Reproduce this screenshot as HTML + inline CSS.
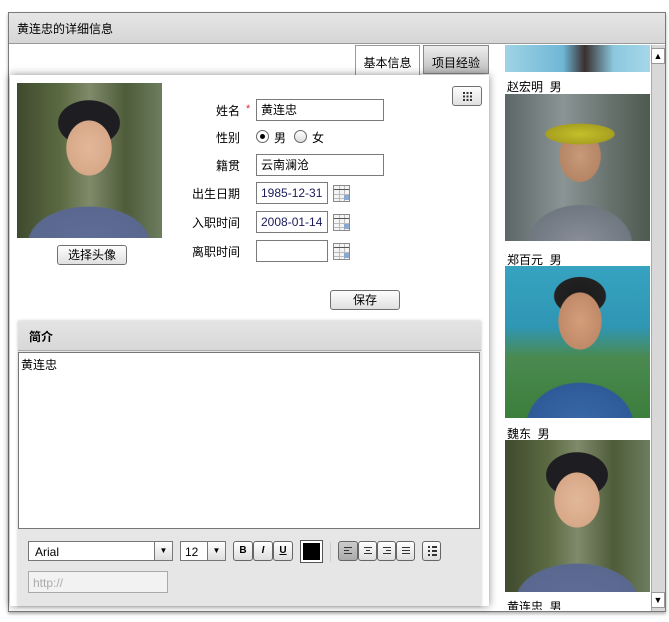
<!DOCTYPE html>
<html><head><meta charset="utf-8"><style>
*{box-sizing:border-box;margin:0;padding:0}
body{width:669px;height:622px;background:#fff;position:relative;overflow:hidden;font-family:"Liberation Sans","Noto Sans CJK SC",sans-serif;font-size:12px;color:#000}
.a{position:absolute}
.inp{position:absolute;border:1px solid #7a7a7a;background:#fff;height:22px;padding:3px 4px;font-size:12px;line-height:15px}
.lbl{position:absolute;text-align:right;width:70px;left:170px;font-size:12px}
.btn{position:absolute;border:1px solid #707070;border-radius:3px;background:linear-gradient(#fdfdfd,#e0e0e0);text-align:center;font-size:12px}
.cal{position:absolute;width:17px;height:17px;border:1px solid #8a8a8a;background:
linear-gradient(#555,#555) 0 3px/100% 1px no-repeat,
linear-gradient(90deg,transparent 5px,#bbb 5px,#bbb 6px,transparent 6px,transparent 10px,#bbb 10px,#bbb 11px,transparent 11px) 0 0/100% 100%,
linear-gradient(transparent 8px,#bbb 8px,#bbb 9px,transparent 9px,transparent 12px,#bbb 12px,#bbb 13px,transparent 13px),#f4f4f4}
.cal:after{content:"";position:absolute;left:10px;top:9px;width:5px;height:5px;background:#8aa8d0}
.photo{position:absolute;overflow:hidden}
.tb{position:absolute;top:541px;height:20px;border:1px solid #666;border-radius:3px;background:linear-gradient(#fff,#ddd);font-size:10px;font-weight:bold;text-align:center;line-height:18px}
.tb svg{position:absolute;left:5px;top:4px}
</style></head><body>
<div class="a" style="left:8px;top:12px;width:658px;height:600px;border:1px solid #7a7a7a;background:#fff;box-shadow:0 2px 3px rgba(0,0,0,.3)"></div>
<div class="a" style="left:9px;top:13px;width:656px;height:31px;background:linear-gradient(#e6e6e6,#d6d6d6);border-bottom:1px solid #9a9a9a;padding:7px 8px;font-size:12px">黄连忠的详细信息</div>
<div class="a" style="left:355px;top:45px;width:65px;height:30px;border:1px solid #999;border-bottom:none;background:#fff;text-align:center;padding-top:8px">基本信息</div>
<div class="a" style="left:423px;top:45px;width:66px;height:29px;border:1px solid #888;background:linear-gradient(#eee,#bdbdbd);text-align:center;padding-top:8px">项目经验</div>
<div class="a" style="left:10px;top:75px;width:479px;height:531px;background:#fff;box-shadow:0 0 8px rgba(0,0,0,.45)"></div>
<div class="photo" style="left:17px;top:83px;width:145px;height:155px;background:
radial-gradient(ellipse 28px 34px at 72px 65px,#e2b89a 0,#d7a888 80%,transparent 82%),
radial-gradient(ellipse 34px 25px at 72px 40px,#1d1d22 0,#1d1d22 90%,transparent 92%),
radial-gradient(ellipse 75px 45px at 72px 160px,#5f6e97 0,#5a6890 80%,transparent 82%),
linear-gradient(90deg,#3f4a2e,#5b6a42 30%,#7f8a6a 50%,#4e5c3a 75%,#6d7d5e)"></div>
<div class="btn" style="left:57px;top:245px;width:70px;height:20px;line-height:18px">选择头像</div>
<div class="btn" style="left:452px;top:86px;width:30px;height:20px"><svg class="a" style="left:10px;top:5px" width="9" height="9"><g fill="#333"><rect x="0" y="0" width="2" height="2"/><rect x="3.5" y="0" width="2" height="2"/><rect x="7" y="0" width="2" height="2"/><rect x="0" y="3.5" width="2" height="2"/><rect x="3.5" y="3.5" width="2" height="2"/><rect x="7" y="3.5" width="2" height="2"/><rect x="0" y="7" width="2" height="2"/><rect x="3.5" y="7" width="2" height="2"/><rect x="7" y="7" width="2" height="2"/></g></svg></div>
<div class="lbl" style="top:102px">姓名</div>
<div class="a" style="left:246px;top:103px;color:#c33;font-size:11px">*</div>
<div class="inp" style="left:256px;top:99px;width:128px">黄连忠</div>
<div class="lbl" style="top:129px">性别</div>
<div class="a" style="left:256px;top:130px;width:13px;height:13px;border:1px solid #666;border-radius:50%;background:#fff"><div class="a" style="left:3px;top:3px;width:5px;height:5px;border-radius:50%;background:#000"></div></div>
<div class="a" style="left:274px;top:129px">男</div>
<div class="a" style="left:294px;top:130px;width:13px;height:13px;border:1px solid #666;border-radius:50%;background:linear-gradient(#fff,#ddd)"></div>
<div class="a" style="left:312px;top:129px">女</div>
<div class="lbl" style="top:157px">籍贯</div>
<div class="inp" style="left:256px;top:154px;width:128px">云南澜沧</div>
<div class="lbl" style="top:185px">出生日期</div>
<div class="inp" style="left:256px;top:182px;width:72px;color:#1a1a5a">1985-12-31</div>
<div class="cal" style="left:333px;top:185px"></div>
<div class="lbl" style="top:214px">入职时间</div>
<div class="inp" style="left:256px;top:211px;width:72px;color:#1a1a5a">2008-01-14</div>
<div class="cal" style="left:333px;top:214px"></div>
<div class="lbl" style="top:243px">离职时间</div>
<div class="inp" style="left:256px;top:240px;width:72px"></div>
<div class="cal" style="left:333px;top:243px"></div>
<div class="btn" style="left:330px;top:290px;width:70px;height:20px;line-height:18px">保存</div>
<div class="a" style="left:18px;top:321px;width:463px;height:285px;background:#e6e6e6;box-shadow:0 0 3px rgba(0,0,0,.25)"></div>
<div class="a" style="left:18px;top:321px;width:463px;height:30px;background:linear-gradient(#e4e4e4,#d8d8d8);border-bottom:1px solid #aaa;font-weight:bold;padding:7px 11px">简介</div>
<div class="a" style="left:18px;top:352px;width:462px;height:177px;background:#fff;border:1px solid #777;padding:3px 2px">黄连忠</div>
<div class="a" style="left:28px;top:541px;width:145px;height:20px;border:1px solid #777;background:#fff;padding:3px 6px">Arial</div>
<div class="a" style="left:154px;top:541px;width:19px;height:20px;border:1px solid #777;background:linear-gradient(#fff,#ddd);font-size:8px;text-align:center;line-height:18px">▼</div>
<div class="a" style="left:180px;top:541px;width:46px;height:20px;border:1px solid #777;background:#fff;padding:3px 4px">12</div>
<div class="a" style="left:207px;top:541px;width:19px;height:20px;border:1px solid #777;background:linear-gradient(#fff,#ddd);font-size:8px;text-align:center;line-height:18px">▼</div>
<div class="tb" style="left:233px;width:20px">B</div>
<div class="tb" style="left:253px;width:20px;font-style:italic">I</div>
<div class="tb" style="left:273px;width:20px;text-decoration:underline">U</div>
<div class="a" style="left:300px;top:540px;width:23px;height:23px;border:1px solid #555;background:#fff;padding:2px"><div style="width:100%;height:100%;background:#000"></div></div>
<div class="a" style="left:330px;top:542px;width:1px;height:20px;background:#ccc"></div>
<div class="tb" style="left:338px;width:20px;background:linear-gradient(#ccc,#aaa)"><svg width="9" height="10"><g stroke="#333"><path d="M0 1.5h8M0 4.5h5M0 7.5h8"/></g></svg></div>
<div class="tb" style="left:358px;width:19px"><svg width="9" height="10"><g stroke="#333"><path d="M0 1.5h8M2 4.5h4M0 7.5h8"/></g></svg></div>
<div class="tb" style="left:377px;width:19px"><svg width="9" height="10"><g stroke="#333"><path d="M0 1.5h8M3 4.5h5M0 7.5h8"/></g></svg></div>
<div class="tb" style="left:396px;width:19px"><svg width="9" height="10"><g stroke="#333"><path d="M0 1.5h8M0 4.5h8M0 7.5h8"/></g></svg></div>
<div class="tb" style="left:422px;width:19px"><svg width="9" height="10"><g stroke="#333" stroke-width="2"><path d="M0 1h2M0 5h2M0 9h2M4 1h5M4 5h5M4 9h5"/></g></svg></div>
<div class="a" style="left:28px;top:571px;width:140px;height:22px;border:1px solid #aaa;background:#f2f2f2;color:#aaa;padding:4px 4px">http://</div>
<div class="photo" style="left:505px;top:45px;width:145px;height:27px;background:linear-gradient(90deg,#9fd3e4,#6fb7d6 40%,#3a3030 55%,#8cc8df 75%,#a5d7e8)"></div>
<div class="a" style="left:507px;top:78px">赵宏明&nbsp;&nbsp;男</div>
<div class="photo" style="left:505px;top:94px;width:145px;height:147px;background:
radial-gradient(ellipse 40px 12px at 75px 40px,#c4c02a 0,#a7a020 85%,transparent 88%),
radial-gradient(ellipse 24px 30px at 75px 62px,#c89a7a 0,#b58564 85%,transparent 88%),
radial-gradient(ellipse 60px 45px at 75px 150px,#8a8f98 0,#6f7780 85%,transparent 88%),
linear-gradient(90deg,#5d6667,#8a9494 40%,#6a7470 70%,#4e5a50)"></div>
<div class="a" style="left:507px;top:251px">郑百元&nbsp;&nbsp;男</div>
<div class="photo" style="left:505px;top:266px;width:145px;height:152px;background:
radial-gradient(ellipse 25px 33px at 75px 55px,#d49d7a 0,#c08a68 85%,transparent 88%),
radial-gradient(ellipse 30px 22px at 75px 30px,#1a1a1a 0,#222 85%,transparent 88%),
radial-gradient(ellipse 62px 50px at 75px 160px,#3a6aa8 0,#2e5a98 85%,transparent 88%),
linear-gradient(#36a3c0,#2f96b4 40%,#4a8a50 60%,#3c7e3c)"></div>
<div class="a" style="left:507px;top:425px">魏东&nbsp;&nbsp;男</div>
<div class="photo" style="left:505px;top:440px;width:145px;height:152px;background:
radial-gradient(ellipse 28px 34px at 72px 60px,#e2b89a 0,#d7a888 80%,transparent 82%),
radial-gradient(ellipse 34px 25px at 72px 35px,#1d1d22 0,#1d1d22 90%,transparent 92%),
radial-gradient(ellipse 75px 45px at 72px 160px,#5f6e97 0,#5a6890 80%,transparent 82%),
linear-gradient(90deg,#3f4a2e,#5b6a42 30%,#7f8a6a 50%,#4e5c3a 75%,#6d7d5e)"></div>
<div class="a" style="left:507px;top:598px;height:12px;overflow:hidden">黄连忠&nbsp;&nbsp;男</div>
<div class="a" style="left:651px;top:45px;width:14px;height:566px;background:#d8d8d8;border-left:1px solid #aaa"></div>
<div class="a" style="left:651px;top:48px;width:14px;height:16px;background:#fff;border:1px solid #999;font-size:9px;text-align:center;line-height:14px">▲</div>
<div class="a" style="left:651px;top:592px;width:14px;height:16px;background:#fff;border:1px solid #999;font-size:9px;text-align:center;line-height:14px">▼</div>
</body></html>
